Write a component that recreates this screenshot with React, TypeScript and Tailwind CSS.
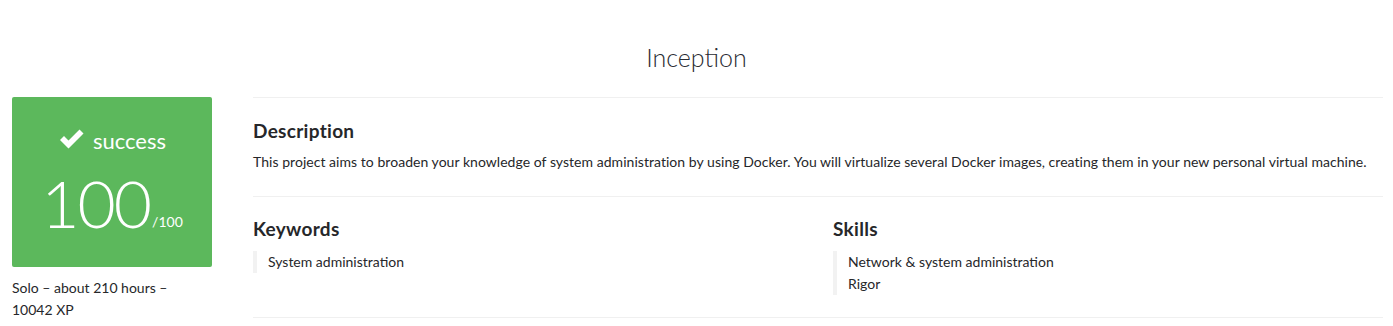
import React from 'react';

const font = { fontFamily: 'Lato, "Liberation Sans", sans-serif' };

function CheckIcon() {
  return (
    <svg width="27" height="22" viewBox="0 0 26 22" className="mr-[8px] mb-[4px]">
      <path d="M1.5 12 L5.5 8 L10 12.5 L21 1.5 L25 5.5 L10 20.5 Z" fill="white" />
    </svg>
  );
}

export default function App() {
  return (
    <div className="bg-white text-[#26272a]" style={font}>
      <h1 className="pt-[42px] pb-[25px] text-center text-[25px] font-light leading-[30px] text-[#2a2c33]">
        Inception
      </h1>

      <div className="flex gap-[41px] pl-[12px] pr-[10px]">
        {/* Score */}
        <div className="w-[200px] shrink-0">
          <div className="flex h-[170px] flex-col items-center rounded-[2px] bg-[#5cb85c] pt-[29px] text-white">
            <div className="flex items-center text-[22px] leading-[30px]">
              <CheckIcon />
              success
            </div>
            <div className="mt-[12px] flex items-end">
              <span className="text-[66px] font-light leading-[70px] tracking-[-2px]">100</span>
              <span className="mb-[8px] ml-[2px] text-[14px] leading-[16px]">/100</span>
            </div>
          </div>
          <p className="mt-[10px] pr-[20px] text-[14px] leading-[22px]">
            Solo – about 210 hours – 10042 XP
          </p>
        </div>

        {/* Details */}
        <div className="flex-1">
          <div className="border-t border-[#f0f0f0] pt-[21px] pb-[24px]">
            <h2 className="text-[19px] font-bold leading-[24px] tracking-[0.3px]">Description</h2>
            <p className="mt-[9px] text-[14px] leading-[20px] tracking-[0.04px]">
              This project aims to broaden your knowledge of system administration by using Docker. You will virtualize several Docker images, creating them in your new personal virtual machine.
            </p>
          </div>
          <div className="grid grid-cols-[580px_1fr] border-t border-b border-[#f0f0f0] pt-[20px] pb-[22px]">
            <div>
              <h2 className="text-[19px] font-bold leading-[24px] tracking-[0.3px]">Keywords</h2>
              <ul className="mt-[10px] border-l-[4px] border-[#f2f2f2] pl-[11px] text-[14px] leading-[22px]">
                <li>System administration</li>
              </ul>
            </div>
            <div>
              <h2 className="text-[19px] font-bold leading-[24px] tracking-[0.3px]">Skills</h2>
              <ul className="mt-[10px] border-l-[4px] border-[#f2f2f2] pl-[11px] text-[14px] leading-[22px]">
                <li>Network &amp; system administration</li>
                <li>Rigor</li>
              </ul>
            </div>
          </div>
        </div>
      </div>
    </div>
  );
}
